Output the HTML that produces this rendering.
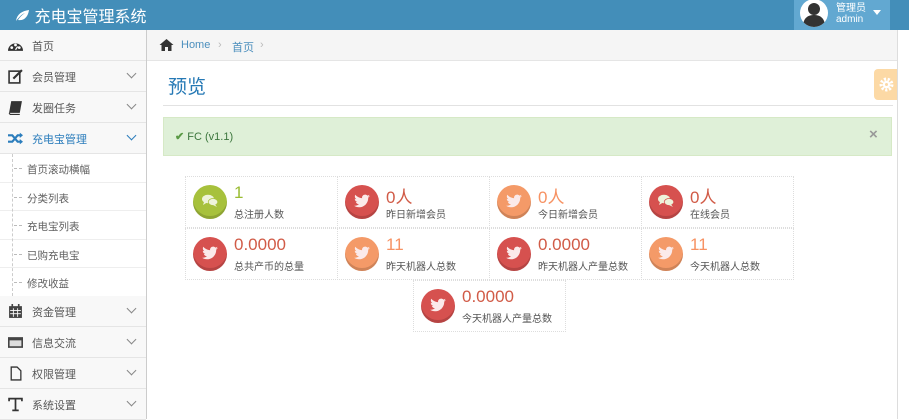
<!DOCTYPE html><html><head><meta charset="utf-8"><style>
*{margin:0;padding:0;box-sizing:border-box}
body{width:909px;height:419px;overflow:hidden;font-family:"Liberation Sans","Noto Sans CJK SC",sans-serif;background:#fff;position:relative;font-size:11px;color:#393939}
.hd{position:absolute;left:0;top:0;width:909px;height:30px;background:#438eb9}
.logo{position:absolute;left:14px;top:3px;color:#fff;font-size:16px}
.user{position:absolute;left:794px;top:0;width:96px;height:30px;background:#62a8d1;color:#fff;font-size:10px;line-height:11px}
.av{position:absolute;left:6px;top:-1px;width:28px;height:28px;border-radius:50%;background:#fff;overflow:hidden}
.sb{position:absolute;left:0;top:30px;width:147px;height:389px;border-right:1px solid #ccc;background:#fff}
.it{position:absolute;left:0;width:146px;height:31px;background:#f8f8f8;border-bottom:1px solid #e5e5e5;font-size:11px;color:#585858}
.it span{position:absolute;left:32px;top:8px}
.it .ic{position:absolute;left:8px;top:8px;width:15px;height:15px}
.it .ch{position:absolute;left:128px;top:9px;width:7px;height:7px;border-right:1.3px solid #888;border-bottom:1.3px solid #888;transform:rotate(45deg)}
.sub{position:absolute;left:0;width:146px;height:28.5px;background:#fff;border-bottom:1px solid #eee;font-size:10.5px;color:#616161}
.sub span{position:absolute;left:27px;top:8px}
.sub:before{content:"";position:absolute;left:14px;top:14px;width:8px;border-top:1px dashed #bbb}
.bc{position:absolute;left:147px;top:30px;width:750px;height:31px;background:#f5f5f5;border-bottom:1px solid #e5e5e5;font-size:11px}
.bc span{position:absolute;top:9px}
.scroll{position:absolute;left:897px;top:30px;width:12px;height:389px;background:#fff;border-left:1px solid #ddd}
.stat{position:absolute;width:153px;height:52px;border:1px dotted #ddd}
.stat .c{position:absolute;left:7px;top:8px;width:34px;height:34px;border-radius:50%;box-shadow:inset 0 -3px 0 rgba(0,0,0,.15)}
.stat .c svg{position:absolute;left:9px;top:9px}
.stat .v{position:absolute;left:48px;top:6px;font-size:17px}
.stat .l{position:absolute;left:48px;top:29px;font-size:10px;color:#555}
.g{background:#a7c13c}.r{background:#d6514f}.o{background:#f49a68}
.tg{color:#9abc32}.tr{color:#d15b47}.to{color:#f79263}
</style></head><body>
<svg width="0" height="0" style="position:absolute"><defs>
<symbol id="bird" viewBox="0 0 16 14"><path d="M16 2C15.4 2.3 14.8 2.4 14.1 2.5 14.8 2.1 15.2 1.5 15.5 0.8 14.8 1.2 14.1 1.4 13.4 1.6 12.1 0.2 9.9 0.3 8.7 1.7 8.1 2.4 7.9 3.3 8.1 4.2 5.4 4.1 3 2.8 1.3 0.8 0.4 2.3 0.9 4.2 2.3 5.1 1.8 5.1 1.3 5 0.8 4.7 0.8 6.3 1.9 7.6 3.4 7.9 2.9 8 2.4 8.1 1.9 8 2.4 9.4 3.6 10.3 5 10.3 3.6 11.4 1.8 12 0 11.8 1.5 12.8 3.3 13.3 5 13.3 10.9 13.3 14.2 8.4 14.2 4.1V3.6C14.9 3.2 15.5 2.6 16 2Z" fill="#fbeaea"/></symbol>
<symbol id="chat" viewBox="0 0 16 14"><ellipse cx="6" cy="5" rx="6" ry="4.2" fill="#eef3da"/><path d="M2 8L1 11 5 8.5Z" fill="#eef3da"/><ellipse cx="11" cy="8" rx="4.8" ry="3.5" fill="#eef3da" stroke="currentColor" stroke-width=".8"/><path d="M13 10.5L15 13 11 11Z" fill="#eef3da"/></symbol>
</defs></svg>
<div class="hd"><div class="logo"><svg width="16" height="14" viewBox="0 0 16 14" style="vertical-align:-1px"><path d="M2 12C3 5 8 2 15 1 14 8 10 12 4 11 6 8 8 6 11 4 8 5 5 8 2 12Z" fill="#fff"/></svg> 充电宝管理系统</div>
<div class="user"><div class="av"><svg width="28" height="28" viewBox="0 0 28 28"><circle cx="14" cy="10" r="6" fill="#333"/><path d="M3 28C3 18 9 16 14 16S25 18 25 28Z" fill="#333"/></svg></div><div style="position:absolute;left:42px;top:3px">管理员<br>admin</div><div style="position:absolute;left:79px;top:10px;border:4px solid transparent;border-top:5px solid #fff"></div></div></div>
<div class="sb">
<div class="it" style="top:0"><svg class="ic" viewBox="0 0 14 14"><path d="M0 12A7 7 0 0 1 14 12Z" fill="#333"/><circle cx="3.5" cy="9" r="1.3" fill="#fff"/><circle cx="7" cy="6.5" r="1.3" fill="#fff"/><circle cx="10.5" cy="9" r="1.3" fill="#fff"/><path d="M7 11L9 8" stroke="#fff" stroke-width="1.2"/></svg><span>首页</span></div>
<div class="it" style="top:31px"><svg class="ic" viewBox="0 0 14 14"><rect x="1" y="2" width="10" height="11" fill="none" stroke="#333" stroke-width="1.5"/><path d="M5 9L13 1" stroke="#333" stroke-width="2"/></svg><span>会员管理</span><i class="ch"></i></div>
<div class="it" style="top:62px"><svg class="ic" viewBox="0 0 14 14"><path d="M3 1H13L11 12H1Z" fill="#333"/><path d="M1 12L2 13.5H11" stroke="#333" fill="none"/></svg><span>发圈任务</span><i class="ch"></i></div>
<div class="it" style="top:93px"><svg class="ic" viewBox="0 0 14 14"><path d="M0 4H4L9 10H12M0 10H4L9 4H12" fill="none" stroke="#2b7dbc" stroke-width="2"/><path d="M11 1.5L14 4 11 6.5ZM11 7.5L14 10 11 12.5Z" fill="#2b7dbc"/></svg><span style="color:#2b7dbc">充电宝管理</span><i class="ch" style="border-color:#2b7dbc"></i></div>
<div class="sub" style="top:124px"><span>首页滚动横幅</span></div>
<div class="sub" style="top:152.5px"><span>分类列表</span></div>
<div class="sub" style="top:181px"><span>充电宝列表</span></div>
<div class="sub" style="top:209.5px"><span>已购充电宝</span></div>
<div class="sub" style="top:238px"><span>修改收益</span></div>
<div style="position:absolute;left:12px;top:124px;height:142px;border-left:1px dashed #ccc"></div>
<div class="it" style="top:266px"><svg class="ic" viewBox="0 0 14 14"><rect x="1" y="2" width="12" height="11" fill="#444"/><path d="M2 6H12M2 9H12M5 4V12M9 4V12" stroke="#fff" stroke-width=".8"/><path d="M4 0V3M10 0V3" stroke="#444" stroke-width="1.5"/></svg><span>资金管理</span><i class="ch"></i></div>
<div class="it" style="top:297px"><svg class="ic" viewBox="0 0 14 14"><rect x="0" y="2" width="14" height="10" fill="#444"/><rect x="1.5" y="5" width="11" height="5.5" fill="#ddd"/></svg><span>信息交流</span><i class="ch"></i></div>
<div class="it" style="top:328px"><svg class="ic" viewBox="0 0 14 14"><path d="M3 1H8.5L12 4.5V13H3Z" fill="none" stroke="#333" stroke-width="1.2"/></svg><span>权限管理</span><i class="ch"></i></div>
<div class="it" style="top:359px"><svg class="ic" viewBox="0 0 14 14"><path d="M1 4V1.5H13V4M7 1.5V12.5M4 12.5H10" stroke="#333" stroke-width="1.6" fill="none"/></svg><span>系统设置</span><i class="ch"></i></div>
</div>
<div class="bc"><svg style="position:absolute;left:12px;top:9px" width="15" height="12" viewBox="0 0 14 12"><path d="M7 0L14 6H12V12H8.5V8H5.5V12H2V6H0Z" fill="#333"/></svg><span style="left:34px;color:#4c8fbd">Home</span><span style="left:71px;color:#bbb">›</span><span style="left:85px;color:#4c8fbd">首页</span><span style="left:113px;color:#bbb">›</span></div>
<div style="position:absolute;left:168px;top:72px;font-size:19px;color:#2679b5">预览</div>
<div style="position:absolute;left:163px;top:105px;width:730px;border-top:1px solid #e2e2e2"></div>
<div style="position:absolute;left:874px;top:69px;width:23px;height:31px;background:#fcd9a5;border-radius:4px 0 0 4px"><svg style="position:absolute;left:5px;top:8px" width="15" height="15" viewBox="0 0 14 14"><circle cx="7" cy="7" r="5" fill="none" stroke="#fff" stroke-width="3" stroke-dasharray="2 1.5"/><circle cx="7" cy="7" r="3.5" fill="#fff"/><circle cx="7" cy="7" r="1.4" fill="#fcd9a5"/></svg></div>
<div style="position:absolute;left:163px;top:117px;width:729px;height:39px;background:#dff0d8;border:1px solid #d6e9c6"><span style="position:absolute;left:11px;top:12px;color:#3c763d;font-size:11px"><b style="color:#5b9a46">✔</b> FC (v1.1)</span><span style="position:absolute;left:705px;top:8px;color:#999;font-size:15px;font-weight:bold">×</span></div>
<div class="stat" style="left:185px;top:176px"><div class="c g" style="color:#a7c13c"><svg width="16" height="14"><use href="#chat"/></svg></div><div class="v tg">1</div><div class="l">总注册人数</div></div>
<div class="stat" style="left:337px;top:176px"><div class="c r"><svg width="16" height="14"><use href="#bird"/></svg></div><div class="v tr">0人</div><div class="l">昨日新增会员</div></div>
<div class="stat" style="left:489px;top:176px"><div class="c o"><svg width="16" height="14"><use href="#bird"/></svg></div><div class="v to">0人</div><div class="l">今日新增会员</div></div>
<div class="stat" style="left:641px;top:176px"><div class="c r" style="color:#d6514f"><svg width="16" height="14"><use href="#chat"/></svg></div><div class="v tr">0人</div><div class="l">在线会员</div></div>
<div class="stat" style="left:185px;top:228px"><div class="c r"><svg width="16" height="14"><use href="#bird"/></svg></div><div class="v tr">0.0000</div><div class="l">总共产币的总量</div></div>
<div class="stat" style="left:337px;top:228px"><div class="c o"><svg width="16" height="14"><use href="#bird"/></svg></div><div class="v to">11</div><div class="l">昨天机器人总数</div></div>
<div class="stat" style="left:489px;top:228px"><div class="c r"><svg width="16" height="14"><use href="#bird"/></svg></div><div class="v tr">0.0000</div><div class="l">昨天机器人产量总数</div></div>
<div class="stat" style="left:641px;top:228px"><div class="c o"><svg width="16" height="14"><use href="#bird"/></svg></div><div class="v to">11</div><div class="l">今天机器人总数</div></div>
<div class="stat" style="left:413px;top:280px"><div class="c r"><svg width="16" height="14"><use href="#bird"/></svg></div><div class="v tr">0.0000</div><div class="l">今天机器人产量总数</div></div>
<div class="scroll"></div>
</body></html>
